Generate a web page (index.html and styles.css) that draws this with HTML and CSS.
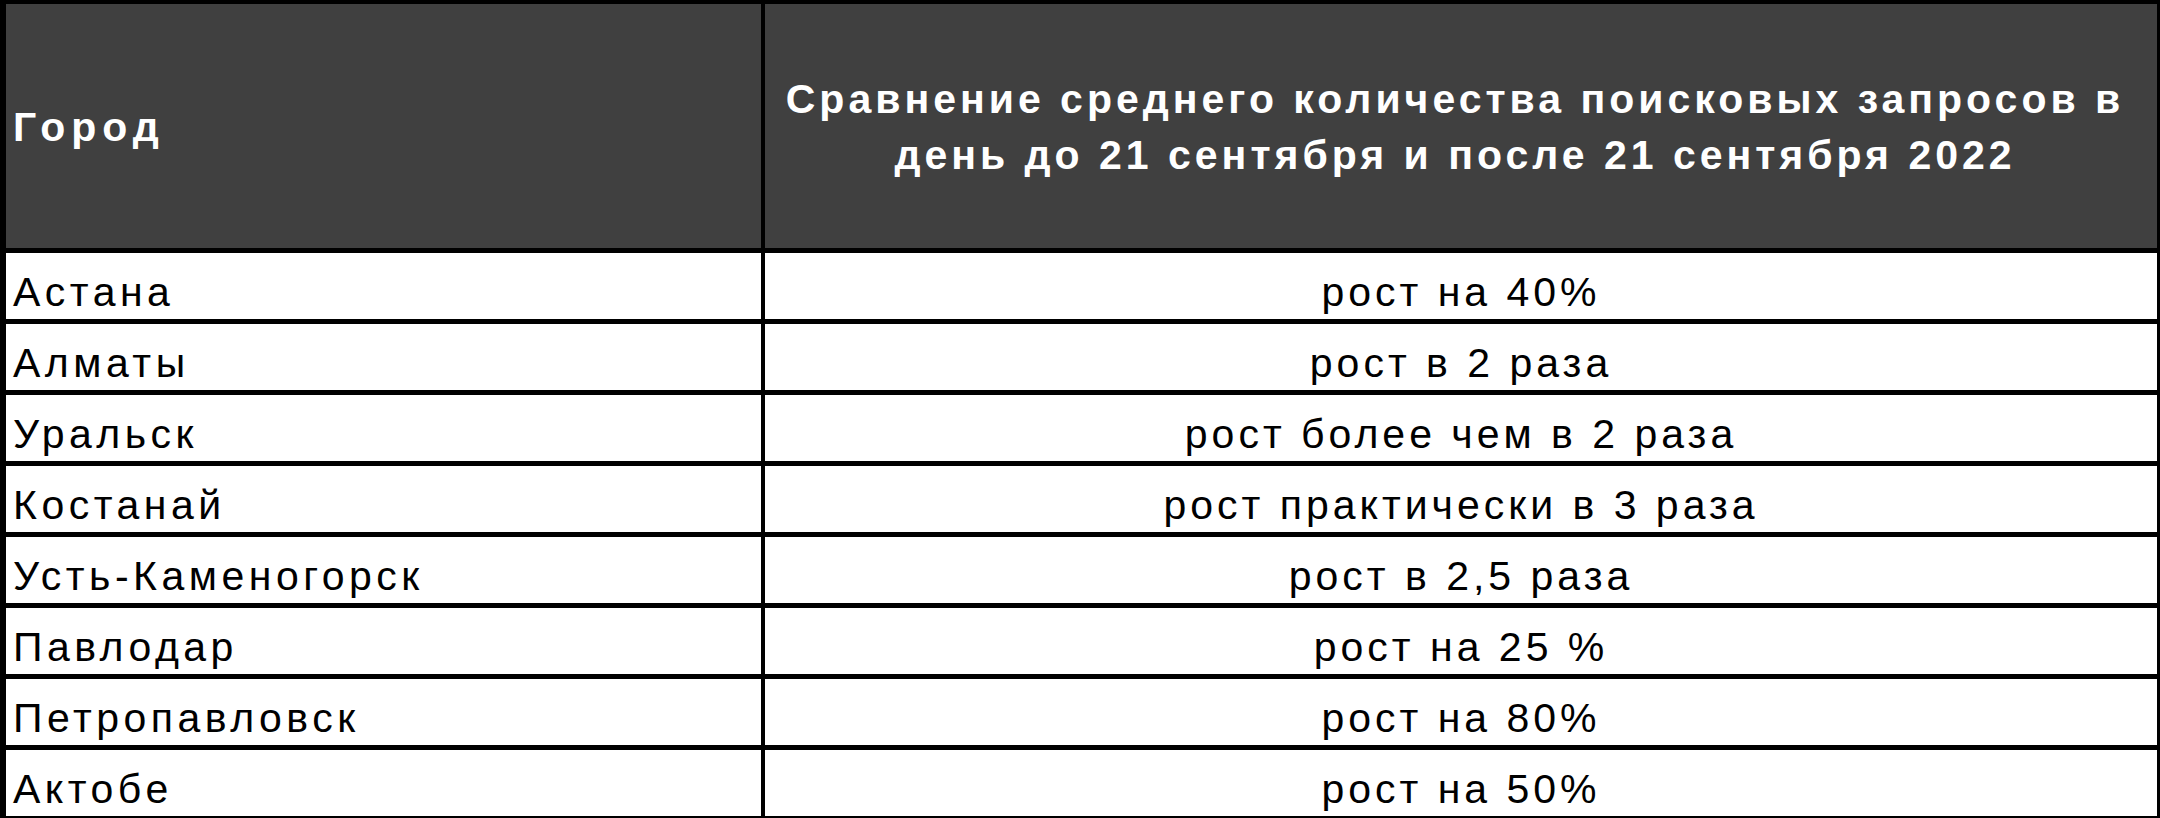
FILE: index.html
```html
<!DOCTYPE html>
<html lang="ru">
<head>
<meta charset="utf-8">
<title>Сравнение поисковых запросов</title>
<link rel="stylesheet" href="styles.css">
</head>
<body>
<div class="sheet">
  <div class="cell head head-city">Город</div>
  <div class="cell head head-cmp"><span class="line">Сравнение среднего количества поисковых запросов в</span><span class="line">день до 21 сентября и после 21 сентября 2022</span></div>

  <div class="cell city">Астана</div>
  <div class="cell val">рост на 40%</div>

  <div class="cell city">Алматы</div>
  <div class="cell val">рост в 2 раза</div>

  <div class="cell city">Уральск</div>
  <div class="cell val">рост более чем в 2 раза</div>

  <div class="cell city">Костанай</div>
  <div class="cell val">рост практически в 3 раза</div>

  <div class="cell city">Усть-Каменогорск</div>
  <div class="cell val">рост в 2,5 раза</div>

  <div class="cell city">Павлодар</div>
  <div class="cell val">рост на 25 %</div>

  <div class="cell city">Петропавловск</div>
  <div class="cell val">рост на 80%</div>

  <div class="cell city">Актобе</div>
  <div class="cell val">рост на 50%</div>
</div>
</body>
</html>
```

FILE: styles.css
```css
html, body {
  margin: 0;
  padding: 0;
  background: #000;
}

.sheet {
  width: 2160px;
  height: 818px;
  box-sizing: border-box;
  background: #000;
  padding: 4px 3px 2px 6px;
  display: grid;
  grid-template-columns: 755px 1392px;
  grid-template-rows: 244px repeat(8, 66px);
  column-gap: 4px;
  row-gap: 5px;
  font-family: "Liberation Sans", Arial, sans-serif;
  font-size: 41px;
  letter-spacing: 4px;
  color: #000;
}

.cell {
  box-sizing: border-box;
  display: flex;
  white-space: nowrap;
  overflow: hidden;
}

.head {
  background: #404040;
  color: #fff;
  font-weight: bold;
  align-items: center;
}

.head-city {
  padding-left: 7px;
  padding-top: 2px;
  letter-spacing: 6px;
}

.head-cmp {
  flex-direction: column;
  justify-content: center;
  align-items: center;
  line-height: 56px;
  padding-top: 2px;
  padding-right: 12px;
}

.line {
  display: block;
}

.city, .val {
  background: #fff;
  line-height: 47px;
  align-items: flex-end;
  padding-bottom: 3px;
}

.city {
  padding-left: 7px;
  letter-spacing: 4.5px;
}

.val {
  justify-content: center;
}
```
